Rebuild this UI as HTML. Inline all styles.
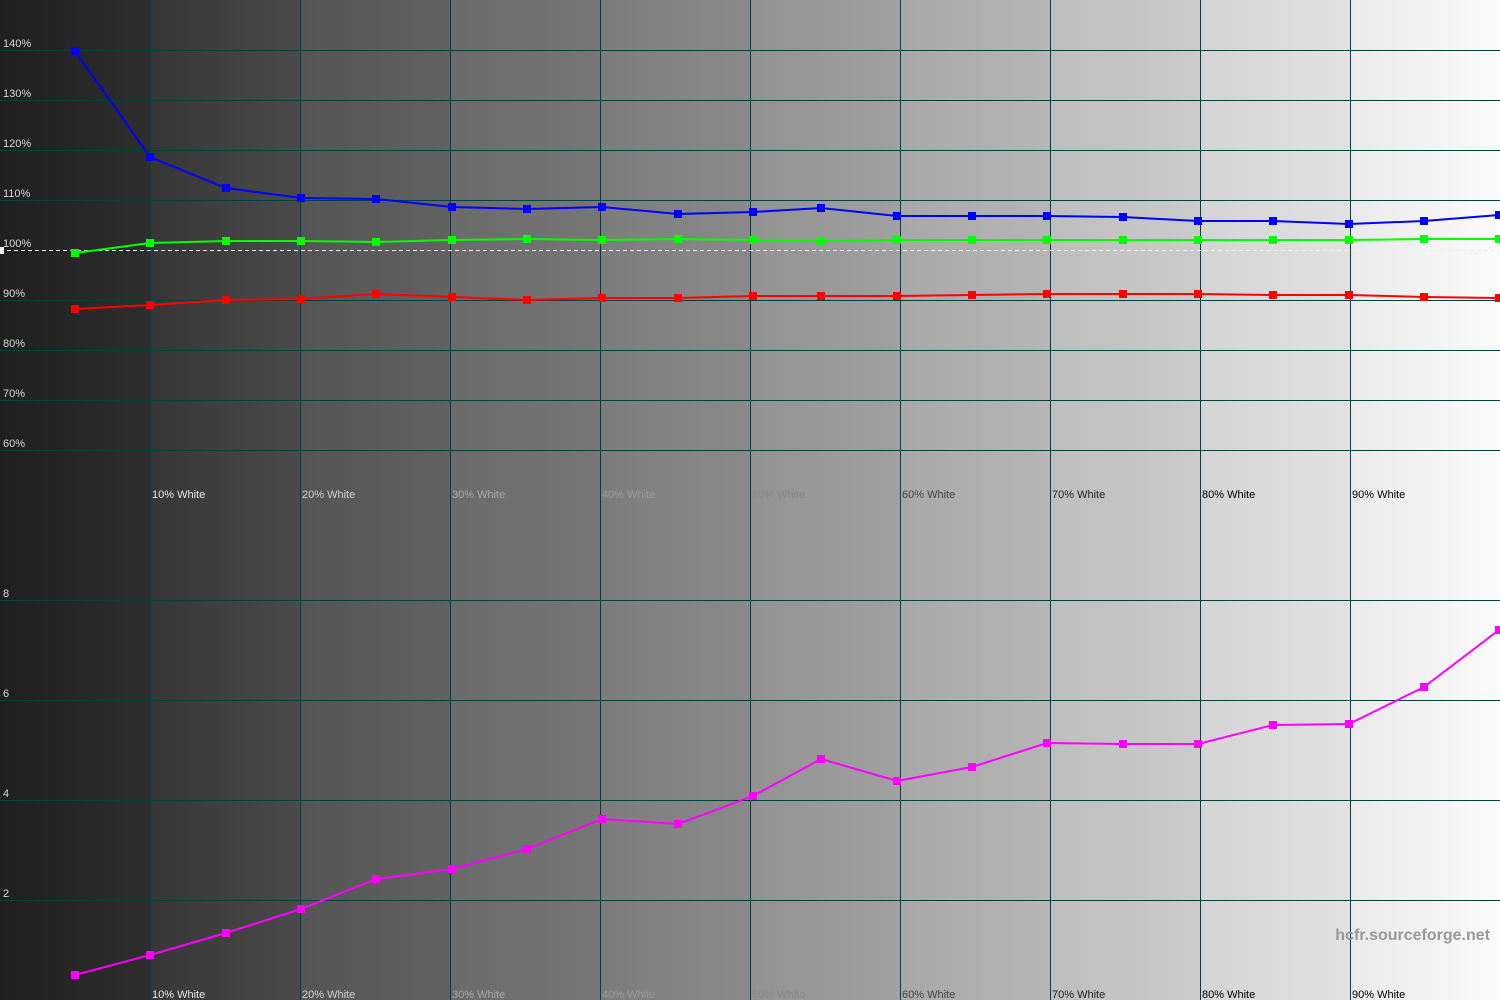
<!DOCTYPE html>
<html><head><meta charset="utf-8"><style>
html,body{margin:0;padding:0;width:1500px;height:1000px;overflow:hidden;background:#222}
svg text{font-family:"Liberation Sans",Arial,sans-serif;font-size:11px}
</style></head><body>
<svg width="1500" height="1000" xmlns="http://www.w3.org/2000/svg">
<defs>
<linearGradient id="g0"><stop offset="0" stop-color="#1f1f1f"/><stop offset="1" stop-color="#2e2e2e"/></linearGradient>
<linearGradient id="g1"><stop offset="0" stop-color="#363636"/><stop offset="1" stop-color="#4a4a4a"/></linearGradient>
<linearGradient id="g2"><stop offset="0" stop-color="#545454"/><stop offset="1" stop-color="#626262"/></linearGradient>
<linearGradient id="g3"><stop offset="0" stop-color="#6a6a6a"/><stop offset="1" stop-color="#777"/></linearGradient>
<linearGradient id="g4"><stop offset="0" stop-color="#7c7c7c"/><stop offset="1" stop-color="#8a8a8a"/></linearGradient>
<linearGradient id="g5"><stop offset="0" stop-color="#929292"/><stop offset="1" stop-color="#a0a0a0"/></linearGradient>
<linearGradient id="g6"><stop offset="0" stop-color="#a8a8a8"/><stop offset="1" stop-color="#b6b6b6"/></linearGradient>
<linearGradient id="g7"><stop offset="0" stop-color="#bebebe"/><stop offset="1" stop-color="#cbcbcb"/></linearGradient>
<linearGradient id="g8"><stop offset="0" stop-color="#d4d4d4"/><stop offset="1" stop-color="#e2e2e2"/></linearGradient>
<linearGradient id="g9"><stop offset="0" stop-color="#eaeaea"/><stop offset="1" stop-color="#fbfbfb"/></linearGradient>
<marker id="mb" markerUnits="userSpaceOnUse" markerWidth="8" markerHeight="8" refX="4" refY="4" overflow="visible"><rect width="8" height="8" fill="#0000ff"/></marker>
<marker id="mg" markerUnits="userSpaceOnUse" markerWidth="8" markerHeight="8" refX="4" refY="4" overflow="visible"><rect width="8" height="8" fill="#00ff00"/></marker>
<marker id="mr" markerUnits="userSpaceOnUse" markerWidth="8" markerHeight="8" refX="4" refY="4" overflow="visible"><rect width="8" height="8" fill="#ff0000"/></marker>
<marker id="mm" markerUnits="userSpaceOnUse" markerWidth="8" markerHeight="8" refX="4" refY="4" overflow="visible"><rect width="8" height="8" fill="#ff00ff"/></marker>
</defs>
<rect x="0" y="0" width="150" height="1000" fill="url(#g0)"/>
<rect x="150" y="0" width="150" height="1000" fill="url(#g1)"/>
<rect x="300" y="0" width="150" height="1000" fill="url(#g2)"/>
<rect x="450" y="0" width="150" height="1000" fill="url(#g3)"/>
<rect x="600" y="0" width="150" height="1000" fill="url(#g4)"/>
<rect x="750" y="0" width="150" height="1000" fill="url(#g5)"/>
<rect x="900" y="0" width="150" height="1000" fill="url(#g6)"/>
<rect x="1050" y="0" width="150" height="1000" fill="url(#g7)"/>
<rect x="1200" y="0" width="150" height="1000" fill="url(#g8)"/>
<rect x="1350" y="0" width="150" height="1000" fill="url(#g9)"/>
<g stroke="#004040" stroke-width="1" shape-rendering="crispEdges">
<path d="M150.5 0V1000M300.5 0V1000M450.5 0V1000M600.5 0V1000M750.5 0V1000M900.5 0V1000M1050.5 0V1000M1200.5 0V1000M1350.5 0V1000"/>
<path d="M0 50.5H1500M0 100.5H1500M0 150.5H1500M0 200.5H1500M0 300.5H1500M0 350.5H1500M0 400.5H1500M0 450.5H1500M0 600.5H1500M0 700.5H1500M0 800.5H1500M0 900.5H1500"/>
</g>
<path d="M0 250.5H1500" stroke="#eee" stroke-width="1" stroke-dasharray="4,3"/>
<rect x="0" y="247" width="4" height="7" fill="#eee"/>
<g fill="#d8d8d8">
<text x="3" y="47">140%</text><text x="3" y="97">130%</text><text x="3" y="147">120%</text><text x="3" y="197">110%</text><text x="3" y="247">100%</text><text x="3" y="297">90%</text><text x="3" y="347">80%</text><text x="3" y="397">70%</text><text x="3" y="447">60%</text>
<text x="3" y="597">8</text><text x="3" y="697">6</text><text x="3" y="797">4</text><text x="3" y="897">2</text>
</g>
<g>
<text x="152" y="498" fill="#e8e8e8">10% White</text><text x="302" y="498" fill="#d0d0d0">20% White</text><text x="452" y="498" fill="#a8a8a8">30% White</text><text x="602" y="498" fill="#999">40% White</text><text x="752" y="498" fill="#888">50% White</text><text x="902" y="498" fill="#444">60% White</text><text x="1052" y="498" fill="#222">70% White</text><text x="1202" y="498" fill="#000">80% White</text><text x="1352" y="498" fill="#000">90% White</text>
<text x="152" y="998" fill="#e8e8e8">10% White</text><text x="302" y="998" fill="#d0d0d0">20% White</text><text x="452" y="998" fill="#a8a8a8">30% White</text><text x="602" y="998" fill="#999">40% White</text><text x="752" y="998" fill="#888">50% White</text><text x="902" y="998" fill="#444">60% White</text><text x="1052" y="998" fill="#222">70% White</text><text x="1202" y="998" fill="#000">80% White</text><text x="1352" y="998" fill="#000">90% White</text>
</g>
<text x="1490" y="940" text-anchor="end" fill="#999" style="font-size:16px;font-weight:bold">hcfr.sourceforge.net</text>
<g fill="none" stroke-width="2">
<polyline stroke="#0000ff" marker-start="url(#mb)" marker-mid="url(#mb)" marker-end="url(#mb)" points="75,51 150,157 226,188 301,198 376,199 452,207 527,209 602,207 678,214 753,212 821,208 897,216 972,216 1047,216 1123,217 1198,221 1273,221 1349,224 1424,221 1499,215"/>
<polyline stroke="#00ff00" marker-start="url(#mg)" marker-mid="url(#mg)" marker-end="url(#mg)" points="75,253 150,243 226,241 301,241 376,242 452,240 527,239 602,240 678,239 753,240 821,241 897,240 972,240 1047,240 1123,240 1198,240 1273,240 1349,240 1424,239 1499,239"/>
<polyline stroke="#ff0000" marker-start="url(#mr)" marker-mid="url(#mr)" marker-end="url(#mr)" points="75,309 150,305 226,300 301,299 376,294 452,297 527,300 602,298 678,298 753,296 821,296 897,296 972,295 1047,294 1123,294 1198,294 1273,295 1349,295 1424,297 1499,298"/>
<polyline stroke="#ff00ff" marker-start="url(#mm)" marker-mid="url(#mm)" marker-end="url(#mm)" points="75,975 150,955 226,933 301,909 376,879 452,869 527,849 602,819 678,824 753,796 821,759 897,781 972,767 1047,743 1123,744 1198,744 1273,725 1349,724 1424,687 1499,630"/>
</g>
</svg>
</body></html>
